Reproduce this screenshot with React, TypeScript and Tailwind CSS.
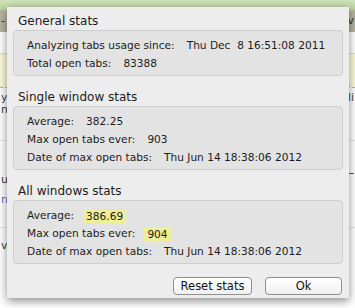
import React from 'react';

type Row = { label: string; value: string; highlight?: boolean };

const sections: { title: string; rows: Row[] }[] = [
  {
    title: 'General stats',
    rows: [
      { label: 'Analyzing tabs usage since:', value: 'Thu Dec\u00a0\u00a08 16:51:08 2011' },
      { label: 'Total open tabs:', value: '83388' },
    ],
  },
  {
    title: 'Single window stats',
    rows: [
      { label: 'Average:', value: '382.25' },
      { label: 'Max open tabs ever:', value: '903' },
      { label: 'Date of max open tabs:', value: 'Thu Jun 14 18:38:06 2012' },
    ],
  },
  {
    title: 'All windows stats',
    rows: [
      { label: 'Average:', value: '386.69', highlight: true },
      { label: 'Max open tabs ever:', value: '904', highlight: true },
      { label: 'Date of max open tabs:', value: 'Thu Jun 14 18:38:06 2012' },
    ],
  },
];

const StatBox: React.FC<{ title: string; rows: Row[]; first?: boolean }> = ({ title, rows, first }) => (
  <div className={first ? '' : 'mt-[13px]'}>
    {/* Section title */}
    <div className="h-[16px] pl-[5px] text-[12px] leading-[16px] text-[#1c1c1c]">{title}</div>
    <div className="mt-[1px] rounded-[4px] border border-[#cdcdcd] bg-[#e3e3e3] pl-[13px] pt-[6px] pb-[2px]">
      {rows.map((r) => (
        <div key={r.label} className="flex h-[18px] items-center text-[10.6px] text-[#1c1c1c]">
          <span>{r.label}</span>
          {r.highlight ? (
            <span className="ml-[9px] bg-[#eeee96] px-[3px] leading-[14px]">{r.value}</span>
          ) : (
            <span className="ml-[12px]">{r.value}</span>
          )}
        </div>
      ))}
    </div>
  </div>
);

export default function App() {
  return (
    <div
      className="relative h-[308px] w-[355px] overflow-hidden bg-white"
      style={{ fontFamily: '"DejaVu Sans", "Liberation Sans", sans-serif' }}
    >
      {/* Blurred window behind the dialog */}
      <div className="flex h-full flex-col">
        <div className="h-[10px] bg-gradient-to-b from-[#cfe3b8] to-[#b9d2a0]" />
        <div className="flex h-[22px] items-center justify-between bg-[#b4b49e] px-[1px] text-[11px] text-[#333]">
          <span>-</span>
          <span>Av</span>
        </div>
        <div className="h-[22px] border-b border-[#dcdcdc] bg-white" />
        <div className="h-[34px] border-b border-dashed border-[#b8b89a] bg-[#fbfbd9]" />
        <div className="flex h-[52px] justify-between bg-white px-[1px] text-[11px] leading-[12px] text-[#444]">
          <span className="pt-[4px]">y<br />m</span>
          <span className="pt-[4px]">li</span>
        </div>
        <div className="flex h-[48px] items-end justify-between border-t border-[#e2e2e2] bg-white px-[1px] text-[11px] text-[#333]">
          <span>u</span>
          <span className="mb-[14px] h-[1px] w-[8px] bg-[#555]" />
        </div>
        <div className="h-[40px] border-b border-[#e2e2e2] bg-white pt-[4px] pl-[1px] text-[11px] text-[#6a6ac8]">n</div>
        <div className="flex-1 bg-white pt-[10px] pl-[1px] text-[11px] text-[#444]">vy</div>
      </div>

      {/* Stats dialog */}
      <div className="absolute left-[7px] top-[7px] flex h-[291px] w-[342px] flex-col bg-[#ededed] px-[6px] pt-[6px] shadow-[0_3px_9px_rgba(0,0,0,0.45)]">
        {sections.map((s, i) => (
          <StatBox key={s.title} title={s.title} rows={s.rows} first={i === 0} />
        ))}
        <div className="mt-[13px] flex justify-end gap-[13px] pr-[1px]">
          <button className="h-[18px] w-[79px] rounded-[4px] border border-[#8f8f8f] bg-gradient-to-b from-white to-[#f0f0f0] text-[11.5px] leading-[16px] text-[#111]">
            Reset stats
          </button>
          <button className="h-[18px] w-[77px] rounded-[4px] border border-[#8f8f8f] bg-gradient-to-b from-white to-[#f0f0f0] text-[11.5px] leading-[16px] text-[#111]">
            Ok
          </button>
        </div>
      </div>
    </div>
  );
}
